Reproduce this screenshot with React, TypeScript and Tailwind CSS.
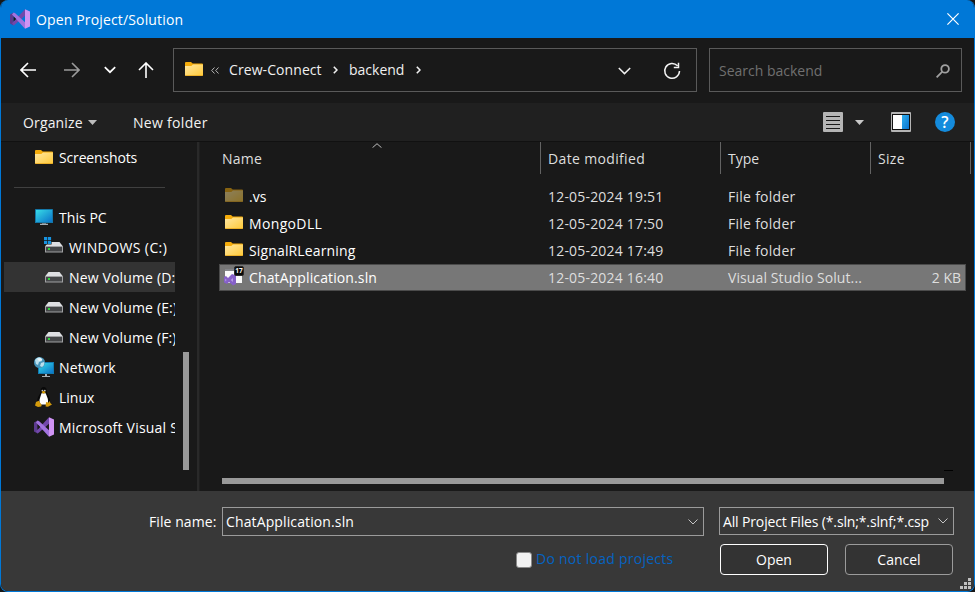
import React from "react";

type IconProps = { className?: string };

function VisualStudioIcon({ className = "" }: IconProps) {
  return (
    <svg className={`shrink-0 ${className}`} width="20" height="20" viewBox="0 0 20 20">
      <path d="M0 5.4 3.6 3.6v12.8L0 14.6z" fill="#5c3a8e" />
      <path d="M3.6 16.4 2 14.2 15 .3v6.4L5 15.6z" fill="#7248ab" />
      <path d="M2 5.4 3.6 3.6 5.2 4.2 15 13.2v6.5z" fill="#a273df" />
      <path d="M3.6 7.4v5.2L6.2 10z" fill="#191919" />
      <path d="M15 .3 20 2.6v14.8l-5 2.4z" fill="#cf93f4" />
    </svg>
  );
}

function FolderIcon({ className = "" }: IconProps) {
  return (
    <svg className={`shrink-0 ${className}`} width="18" height="14" viewBox="0 0 18 14">
      <defs>
        <linearGradient id="folderFront" x1="0" y1="0" x2="1" y2="1">
          <stop offset="0" stopColor="#ffe7a2" />
          <stop offset="1" stopColor="#ffc937" />
        </linearGradient>
      </defs>
      <path d="M0 1Q0 0 1 0h5l1.7 1.6H17q1 0 1 1V8H0z" fill="#f5ac0b" />
      <path d="M0 4h6.3L8 2.6h10V13q0 1-1 1H1q-1 0-1-1z" fill="url(#folderFront)" />
      <path d="M.3 13.5h17.4" stroke="#e9a81f" strokeWidth=".8" />
    </svg>
  );
}

function MonitorIcon() {
  return (
    <svg className="ml-px shrink-0" width="18" height="16" viewBox="0 0 18 16">
      <defs>
        <linearGradient id="screen" x1="0" y1="0" x2="1" y2="1">
          <stop offset="0" stopColor="#37dbe6" />
          <stop offset="1" stopColor="#0b73c9" />
        </linearGradient>
      </defs>
      <rect width="18" height="14" rx=".6" fill="#1477a8" />
      <rect x="1" y="1" width="16" height="12" fill="url(#screen)" />
      <path d="M7 14h4v1H7z" fill="#6d7880" />
      <path d="M5 14.8h8v1.2H5z" fill="#a5afb5" />
    </svg>
  );
}

function DriveIcon({ windows = false }: { windows?: boolean }) {
  return (
    <svg className="shrink-0" width="20" height="20" viewBox="0 0 20 20">
      <path d="M4.5 5h11L19 9.5H1z" fill="#dedfe2" />
      <path d="M1 9h18v6.5H1z" fill="#a0a1a3" />
      <path d="M2 10h16v4.5H2z" fill="#454648" />
      <rect x="4" y="11" width="2" height="2" fill="#2bd83b" />
      {windows && (
        <g>
          <path d="M0 0h7.6v7.6H0z" fill="#191919" />
          <path d="M0 0h3.2v3.2H0zM3.9 0h3.2v3.2H3.9zM0 3.9h3.2v3.2H0zM3.9 3.9h3.2v3.2H3.9z" fill="#1793e0" />
        </g>
      )}
    </svg>
  );
}

function NetworkIcon() {
  return (
    <svg className="shrink-0" width="20" height="20" viewBox="0 0 20 20">
      <path d="M4 5h16v12H4z" fill="#117ab0" />
      <path d="M5 6h14v10H5z" fill="url(#screen)" />
      <path d="M11 17h2v2h3v1H8v-1h3z" fill="#a6b0b7" />
      <circle cx="5.5" cy="5.5" r="5.5" fill="#4793b8" />
      <path d="M1 3Q4-1 7 1l1 3-3 1-1 3-2-1zM7 6l3-1q1 3-2 5L6 9z" fill="#b9dfed" />
      <path d="M3 1.5 7 1l1.5 2L5 4z" fill="#e5f5fb" />
    </svg>
  );
}

function LinuxIcon() {
  return (
    <svg className="ml-px shrink-0" width="17" height="20" viewBox="0 0 17 20">
      <path d="M5.7 3.5Q5.7 0 8.7 0t3 4q0 2 2 5t1 8H2.5q-1-5 1.7-9 1.7-2 1.5-4.5z" fill="#090909" />
      <path d="M6.5 6.3h4.2l2 5.2q1.2 4-1.3 6H6Q3.5 15 5 11z" fill="#fff" />
      <circle cx="7.4" cy="3.6" r=".9" fill="#c8c8c8" />
      <circle cx="9.8" cy="3.6" r=".9" fill="#c8c8c8" />
      <path d="m6.4 5 2-1 2.5 1-2.2 1.7z" fill="#e4a400" />
      <path d="m1 15 2.7-1.2 3 4.2-.5 1.5L3 20l-3-1.5zM11 15l2.3.7 1.2-1.8 1 2.3 1.5 1.3-4 2.2-2.4-.3z" fill="#d59b0b" />
    </svg>
  );
}

function SolutionIcon() {
  return (
    <svg className="-mt-1 shrink-0" width="20" height="20" viewBox="0 0 20 20">
      <path d="M1 4h17v13H1z" fill="#fafafa" />
      <path d="M1 3h10v2H1z" fill="#85868a" />
      <path d="m0 11 2-1 2 2 4-4 4 1.5v8.5l-3 1.5L5 16l-2 2-3-1.5z" fill="#8660c8" />
      <path d="m1.2 12.5 1.5 1.5-1.5 1.5zM9 12v4l-2.3-2z" fill="#b59ae3" />
      <rect x="10.5" y=".5" width="9" height="9" rx="1.5" fill="#080808" stroke="#2a2a2a" />
      <text x="15" y="7.4" textAnchor="middle" fontFamily="Open Sans, sans-serif" fontSize="6.5" fontWeight="700" fill="#fff">17</text>
    </svg>
  );
}

function Chevron({ className = "" }: IconProps) {
  return (
    <svg className={`shrink-0 ${className}`} width="13" height="8" viewBox="0 0 13 8" fill="none">
      <path d="m.8 1 5.7 5.6L12.2 1" stroke="currentColor" strokeWidth="1.5" />
    </svg>
  );
}

function CrumbChevron({ className = "" }: IconProps) {
  return (
    <svg className={`shrink-0 ${className}`} width="5" height="8" viewBox="0 0 5 8" fill="none">
      <path d="m.8.7 3.2 3.3L.8 7.3" stroke="#f0f0f0" strokeWidth="1.6" />
    </svg>
  );
}

function TitleBar() {
  return (
    <header className="-mx-px flex h-[38px] shrink-0 items-center bg-[#0078d7] pl-[10px] pr-4 text-white">
      <VisualStudioIcon />
      <span className="ml-[6px] mt-px tracking-[0.15px]">Open Project/Solution</span>
      <svg className="ml-auto" width="12" height="12" viewBox="0 0 12 12">
        <path d="m.4.4 11.2 11.2m0-11.2L.4 11.6" stroke="white" strokeWidth="1.2" />
      </svg>
    </header>
  );
}

function NavigationBar() {
  return (
    <nav className="flex h-[65px] shrink-0 items-center bg-[#191919] pb-px text-[#f0f0f0]">
      <svg className="ml-[19px]" width="16" height="16" viewBox="0 0 16 16" fill="none" stroke="#fff" strokeWidth="1.6">
        <path d="M16 8H1M8 1 1 8l7 7" />
      </svg>
      <svg className="ml-7" width="16" height="16" viewBox="0 0 16 16" fill="none" stroke="#9b9b9b" strokeWidth="1.6">
        <path d="M0 8h15M8 1l7 7-7 7" />
      </svg>
      <svg className="-mt-px ml-[24px]" width="12" height="8" viewBox="0 0 12 8" fill="none" stroke="#fff" strokeWidth="1.7">
        <path d="m.8 1.2 5.2 5 5.2-5" />
      </svg>
      <svg className="ml-[22px]" width="16" height="16" viewBox="0 0 16 16" fill="none" stroke="#fff" strokeWidth="1.6">
        <path d="M8 16V1M1 8l7-7 7 7" />
      </svg>
      <div className="ml-[19px] flex h-11 w-[524px] items-center border border-[#5a5a5a] pl-[11px]">
        <FolderIcon className="-mt-0.5" />
        <svg className="ml-2" width="8" height="7" viewBox="0 0 8 7" fill="none" stroke="#b5b5b5">
          <path d="M3.5.5.7 3.5l2.8 3M7.5.5 4.7 3.5l2.8 3" />
        </svg>
        <span className="ml-2.5 w-[93px] whitespace-nowrap tracking-[0.08px]">Crew-Connect</span>
        <CrumbChevron className="ml-[11px]" />
        <span className="ml-[11px] w-[56px] whitespace-nowrap">backend</span>
        <CrumbChevron className="ml-[11px]" />
        <Chevron className="ml-[197px] mt-0.5" />
        <svg className="ml-[32px] mt-px" width="18" height="18" viewBox="0 0 18 18" fill="none" stroke="#f3f3f3" strokeWidth="1.5">
          <path d="M14.5 3.8A7.4 7.4 0 1 0 16.5 9M15.5.8v4.6h-4.7" />
        </svg>
      </div>
      <div className="ml-3 flex h-11 w-[253px] items-center border border-[#5a5a5a] pl-[9px]">
        <span className="mt-px text-[#707070]">Search backend</span>
        <svg className="ml-auto mr-[11px] mt-px" width="14" height="14" viewBox="0 0 14 14" fill="none" stroke="#a0a0a0" strokeWidth="1.8">
          <circle cx="9.1" cy="4.9" r="3.8" />
          <path d="M6.3 7.7.6 13.4" />
        </svg>
      </div>
    </nav>
  );
}

function CommandBar() {
  return (
    <div className="flex h-[38px] shrink-0 items-center bg-[#202020] text-[#f2f2f2]">
      <span className="ml-[22px] mt-px w-[60px] whitespace-nowrap tracking-[0.15px]">Organize</span>
      <svg className="ml-[5px]" width="9" height="5" viewBox="0 0 9 5">
        <path d="M0 0h9L4.5 5z" fill="#bdbdbd" />
      </svg>
      <span className="ml-[36px] mt-px tracking-[0.3px]">New folder</span>
      <svg className="ml-auto" width="20" height="20" viewBox="0 0 20 20">
        <rect width="20" height="20" rx="1" fill="#b5b5b5" />
        <path d="M3 4.5h14M3 8.5h14M3 12.5h14M3 16.5h14" stroke="#191919" />
      </svg>
      <svg className="ml-[12px]" width="9" height="5" viewBox="0 0 9 5">
        <path d="M0 0h9L4.5 5z" fill="#c8c8c8" />
      </svg>
      <svg className="ml-[27px]" width="20" height="20" viewBox="0 0 20 20">
        <defs>
          <linearGradient id="pane" x1="0" y1="0" x2="1" y2="1">
            <stop offset="0" stopColor="#2fb0ee" />
            <stop offset="1" stopColor="#0a73d0" />
          </linearGradient>
        </defs>
        <rect width="20" height="20" rx="1" fill="#b5b5b5" />
        <path d="M1 2h18v16H1z" fill="#111" />
        <path d="M2 3h9v14H2z" fill="#fff" />
        <path d="M11 3h7v14h-7z" fill="url(#pane)" />
      </svg>
      <span className="ml-6 mr-[19px] flex size-5 items-center justify-center rounded-full bg-[#148bdc] text-[16px] font-semibold leading-none text-white">?</span>
    </div>
  );
}

type TreeItem = { label: string; icon: React.ReactNode; nested?: boolean; selected?: boolean; tracking: string };

const treeItems: TreeItem[] = [
  { label: "This PC", icon: <MonitorIcon />, tracking: "tracking-[0.05px]" },
  { label: "WINDOWS (C:)", icon: <DriveIcon windows />, nested: true, tracking: "tracking-[0.4px]" },
  { label: "New Volume (D:)", icon: <DriveIcon />, nested: true, selected: true, tracking: "tracking-[0.15px]" },
  { label: "New Volume (E:)", icon: <DriveIcon />, nested: true, tracking: "tracking-[0.15px]" },
  { label: "New Volume (F:)", icon: <DriveIcon />, nested: true, tracking: "tracking-[0.15px]" },
  { label: "Network", icon: <NetworkIcon />, tracking: "tracking-[0.15px]" },
  { label: "Linux", icon: <LinuxIcon />, tracking: "" },
  { label: "Microsoft Visual Studio", icon: <VisualStudioIcon />, tracking: "tracking-[0.22px]" },
];

function Sidebar() {
  return (
    <aside className="flex w-[200px] shrink-0 bg-[#191919] text-white">
      <div className="w-[174px] shrink-0 overflow-hidden whitespace-nowrap pl-[3px]">
        <div className="flex h-[31px] items-center pl-[31px]">
          <FolderIcon className="-mt-px" />
          <span className="ml-1.5 tracking-[-0.15px]">Screenshots</span>
        </div>
        <div className="ml-[10px] mt-[14px] h-px w-[151px] bg-[#404040]" />
        <div className="mt-[14px]">
          {treeItems.map((item) => (
            <div
              key={item.label}
              className={`flex h-[30px] items-center ${item.nested ? "pl-10" : "pl-[30px]"} ${item.selected ? "bg-[#333333]" : ""}`}
            >
              <span className="flex w-[25px] shrink-0 items-center">{item.icon}</span>
              <span className={`mt-px ${item.tracking}`}>{item.label}</span>
            </div>
          ))}
        </div>
      </div>
      <div className="ml-2 mt-[210px] h-[118px] w-1.5 bg-[#999999]" />
      <div className="ml-2 w-[3px] border-r border-[#1f1f1f] bg-[#292929]" />
    </aside>
  );
}

const files = [
  { name: ".vs", date: "12-05-2024 19:51", type: "File folder", typeTracking: "tracking-[0.27px]", hidden: true, tracking: "" },
  { name: "MongoDLL", date: "12-05-2024 17:50", type: "File folder", typeTracking: "tracking-[0.27px]", tracking: "tracking-[0.35px]" },
  { name: "SignalRLearning", date: "12-05-2024 17:49", type: "File folder", typeTracking: "tracking-[0.27px]", tracking: "tracking-[0.14px]" },
  {
    name: "ChatApplication.sln",
    date: "12-05-2024 16:40",
    type: "Visual Studio Solut...",
    typeTracking: "tracking-[0.1px]",
    size: "2 KB",
    selected: true,
    tracking: "tracking-[0.12px]",
  },
];

function FileList() {
  return (
    <section className="flex min-w-0 flex-1 flex-col bg-[#191919] text-[#dedede]">
      <div className="relative flex h-8 items-center whitespace-nowrap">
        <span className="ml-[21px] w-[318px] pt-0.5 tracking-[0.25px]">Name</span>
        <span className="h-full w-[180px] border-l border-[#636363] pl-[7px] leading-[34px] tracking-[0.35px]">Date modified</span>
        <span className="h-full w-[150px] border-l border-[#636363] pl-[7px] leading-[34px]">Type</span>
        <span className="h-full w-[101px] border-x border-[#636363] pl-[7px] leading-[34px] tracking-[0.3px]">Size</span>
        <svg className="absolute left-[171px] top-px" width="10" height="5" viewBox="0 0 10 5" fill="none" stroke="#bdbdbd">
          <path d="m.5 4.7 4.5-4 4.5 4" />
        </svg>
      </div>
      <div className="mt-[9px] pl-[18px]">
        {files.map((file) => (
          <div
            key={file.name}
            className={`flex h-[27px] w-[747px] items-center whitespace-nowrap border ${file.selected ? "border-[#4b4b4b] bg-[#777777]" : "border-transparent"}`}
          >
            <span className="ml-1 flex w-[25px] items-center">
              {file.selected ? <SolutionIcon /> : <FolderIcon className={file.hidden ? "-mt-[3px] ml-px opacity-50" : "-mt-[3px] ml-px"} />}
            </span>
            <span className="w-[299px] text-white">
              <span className={file.tracking}>{file.name}</span>
            </span>
            <span className="w-[180px] tracking-[0.19px]">{file.date}</span>
            <span className={`w-[150px] ${file.typeTracking}`}>{file.type}</span>
            <span className="ml-auto mr-1">{file.size}</span>
          </div>
        ))}
      </div>
      <div className="mt-auto mb-[7px] ml-[21px] flex items-end">
        <div className="h-1.5 w-[722px] bg-[#999999]" />
        <div className="mb-[13px] h-px w-[9px] bg-black" />
      </div>
    </section>
  );
}

function Footer() {
  return (
    <footer className="flex h-[100px] shrink-0 flex-col bg-[#383838] text-white">
      <div className="mt-4 flex h-[29px] items-center whitespace-nowrap">
        <label className="ml-[148px] w-[73px] tracking-[0.08px]">File name:</label>
        <div className="flex h-[29px] w-[482px] items-center border border-[#9b9b9b] pl-[3px]">
          <span className="tracking-[0.12px]">ChatApplication.sln</span>
          <svg className="ml-auto mr-[5px]" width="10" height="6" viewBox="0 0 10 6" fill="none" stroke="#c6c6c6">
            <path d="m.5.5 4.5 4.5 4.5-4.5" />
          </svg>
        </div>
        <div className="ml-[15px] flex h-7 w-[235px] items-center self-start border border-[#9b9b9b] pl-[3px]">
          <span className="mt-px tracking-[-0.14px]">All Project Files (*.sln;*.slnf;*.csp</span>
          <svg className="ml-auto mr-[5px]" width="10" height="6" viewBox="0 0 10 6" fill="none" stroke="#c6c6c6">
            <path d="m.5.5 4.5 4.5 4.5-4.5" />
          </svg>
        </div>
      </div>
      <div className="mt-2 flex h-[31px] items-center whitespace-nowrap">
        <span className="ml-[515px] size-4 rounded-[3px] border border-[#8a8a8a] bg-[#f3f3f3]" />
        <span className="-mt-px ml-1 w-[137px] tracking-[0.26px] text-[#0563c1]">Do not load projects</span>
        <button className="ml-[47px] h-[31px] w-[108px] rounded border border-white bg-[#333333]">Open</button>
        <button className="ml-[17px] h-[31px] w-[108px] rounded border border-[#9b9b9b] bg-[#333333]">Cancel</button>
      </div>
      <svg className="ml-auto mr-[3px] mt-[3px]" width="11" height="11" viewBox="0 0 11 11">
        <path d="M8 0h3v3H8zM4 4h3v3H4zM8 4h3v3H8zM0 8h3v3H0zM4 8h3v3H4zM8 8h3v3H8z" fill="#bfbfbf" />
      </svg>
    </footer>
  );
}

export default function App() {
  return (
    <div className="h-[592px] w-[975px] bg-[#171717]">
      <main className="flex h-full flex-col overflow-hidden rounded-lg border-x border-b border-[#0078d7] bg-[#191919] font-['Open_Sans','Noto_Sans',sans-serif] text-[14px] leading-5">
        <TitleBar />
        <NavigationBar />
        <CommandBar />
        <div className="flex min-h-0 flex-1 border-t border-[#111111]">
          <Sidebar />
          <FileList />
        </div>
        <Footer />
      </main>
    </div>
  );
}
